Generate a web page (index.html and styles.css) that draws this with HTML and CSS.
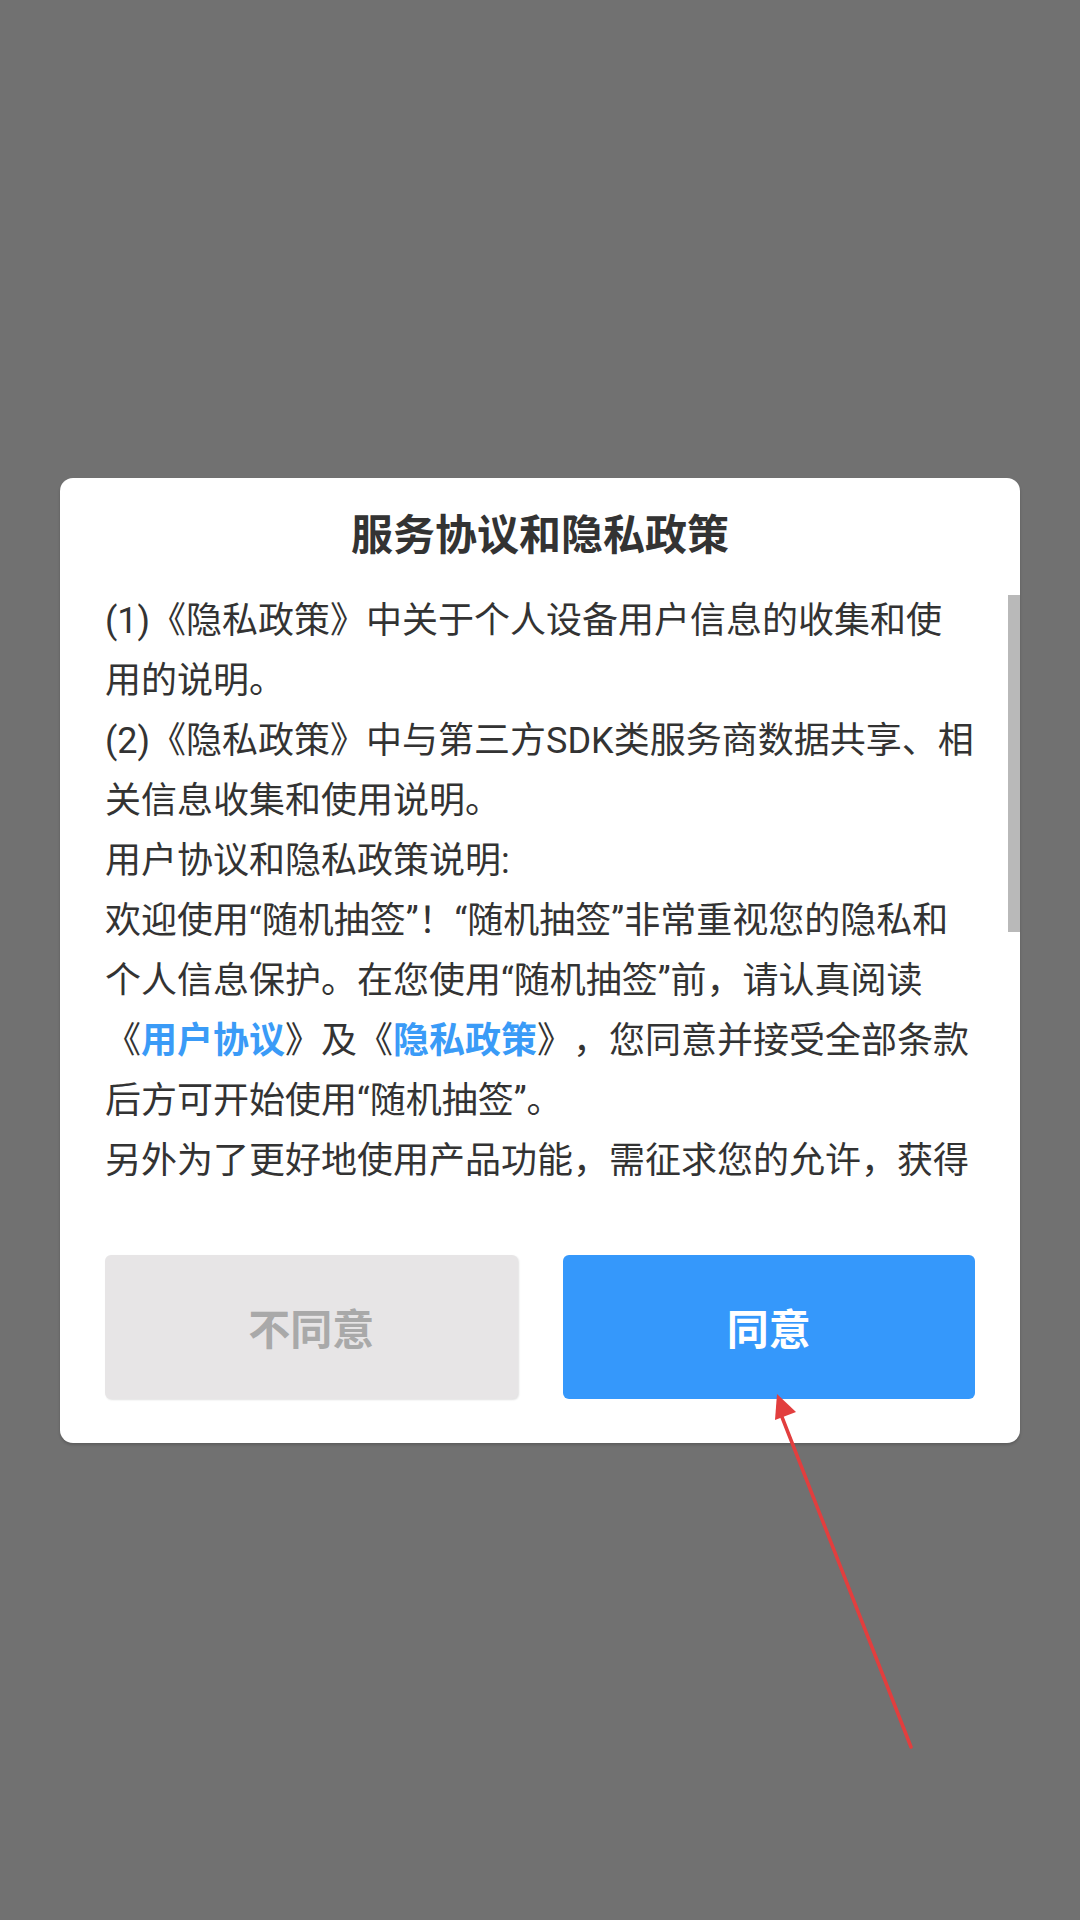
FILE: index.html
```html
<!DOCTYPE html>
<html lang="zh-CN">
<head>
<meta charset="utf-8">
<title>服务协议和隐私政策</title>
<link rel="stylesheet" href="styles.css">
</head>
<body>
<div class="screen">
  <div class="dialog">
    <h1 class="title">服务协议和隐私政策</h1>
    <div class="scroll">
      <div class="content">
        <p>(1)《隐私政策》中关于个人设备用户信息的收集和使用的说明。</p>
        <p>(2)《隐私政策》中与第三方SDK类服务商数据共享、相关信息收集和使用说明。</p>
        <p>用户协议和隐私政策说明:</p>
        <p>欢迎使用“随机抽签”！“随机抽签”非常重视您的隐私和个人信息保护。在您使用“随机抽签”前，请认真阅读《<a class="link">用户协议</a>》及《<a class="link">隐私政策</a>》，您同意并接受全部条款后方可开始使用“随机抽签”。</p>
        <p>另外为了更好地使用产品功能，需征求您的允许，获得以下权限：存储权限、设备信息权限，用于保存抽签结果与保障服务安全。</p>
      </div>
      <div class="thumb"></div>
    </div>
    <div class="actions">
      <button class="btn btn-decline">不同意</button>
      <button class="btn btn-accept">同意</button>
    </div>
  </div>
  <svg class="arrow" width="1080" height="1920" viewBox="0 0 1080 1920">
    <line x1="911" y1="1747" x2="780" y2="1412" stroke="#e23e3e" stroke-width="3.5" stroke-linecap="round"/>
    <polygon points="777,1394 796,1412 775,1420" fill="#e23e3e"/>
  </svg>
</div>
</body>
</html>
```

FILE: styles.css
```css
* {
  box-sizing: border-box;
}

html, body {
  margin: 0;
  padding: 0;
}

body {
  background: #717171;
  font-family: Roboto, "Noto Sans CJK SC", sans-serif;
}

.screen {
  position: relative;
  width: 1080px;
  height: 1920px;
  display: flex;
  align-items: center;
  justify-content: center;
}

.dialog {
  width: 960px;
  background: #ffffff;
  border-radius: 13px;
  box-shadow: 0 2px 3px rgba(0, 0, 0, 0.18);
  display: flex;
  flex-direction: column;
}

.title {
  margin: 0;
  padding-top: 28px;
  margin-bottom: 25px;
  font-size: 42px;
  line-height: 60px;
  font-weight: 700;
  color: #333333;
  text-align: center;
}

.scroll {
  position: relative;
  height: 600px;
  overflow: hidden;
}

.content {
  padding: 0 45px;
  text-spacing-trim: space-all;
}

.content p {
  margin: 0;
  font-size: 36px;
  line-height: 60px;
  color: #333333;
}

.link {
  color: #3a9bf7;
  font-weight: 700;
}

.thumb {
  position: absolute;
  right: 0;
  top: 4px;
  width: 12px;
  height: 337px;
  background: #b9b9b9;
}

.actions {
  display: flex;
  gap: 45px;
  padding: 64px 45px 44px;
}

.btn {
  flex: 1;
  height: 144px;
  border: none;
  border-radius: 6px;
  font-family: Roboto, "Noto Sans CJK SC", sans-serif;
  font-size: 42px;
  font-weight: 700;
  padding: 0;
}

.btn-decline {
  background: #e7e5e6;
  color: #a9a9a9;
  box-shadow: 1px 1px 2px rgba(0, 0, 0, 0.12);
}

.btn-accept {
  background: #3598fb;
  color: #ffffff;
}

.arrow {
  position: absolute;
  left: 0;
  top: 0;
  pointer-events: none;
}
```
